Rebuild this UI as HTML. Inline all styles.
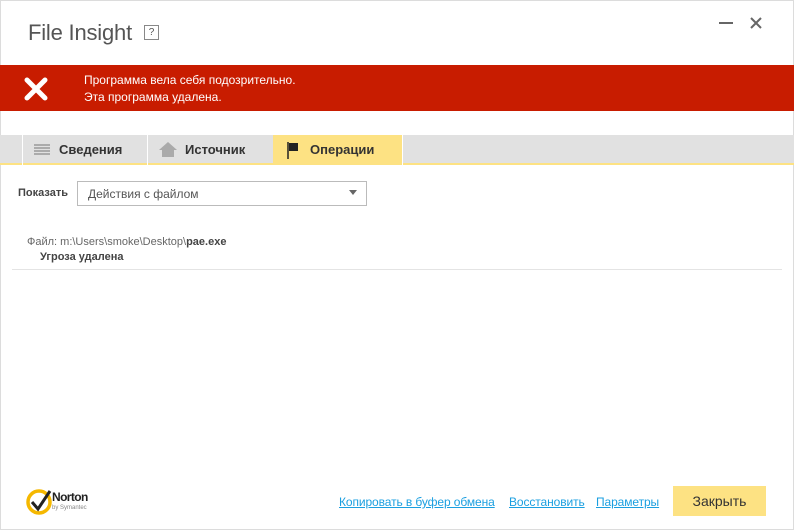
<!DOCTYPE html><html><head><meta charset="utf-8"><style>
*{margin:0;padding:0;box-sizing:border-box}
body{width:794px;height:530px;background:#fff;font-family:"Liberation Sans","DejaVu Sans",sans-serif;position:relative;overflow:hidden}
.a{position:absolute}
</style></head><body>
<div class="a" style="left:0;top:0;width:794px;height:530px;border:1px solid #dcdcdc"></div>
<div class="a" style="left:28px;top:20px;font-size:22px;color:#555;letter-spacing:-0.2px">File Insight</div>
<div class="a" style="left:144px;top:25px;width:15px;height:15px;border:1px solid #888;font-size:10px;color:#555;text-align:center;line-height:13px">?</div>
<div class="a" style="left:719px;top:22px;width:14px;height:2px;background:#666"></div>
<svg class="a" style="left:749px;top:16px" width="14" height="14"><path d="M2 2L12 12M12 2L2 12" stroke="#666" stroke-width="2"/></svg>
<div class="a" style="left:0;top:65px;width:794px;height:46px;background:#c81c00"></div>
<svg class="a" style="left:24px;top:77px" width="24" height="24"><path d="M3 3L21 21M21 3L3 21" stroke="#fff" stroke-width="5" stroke-linecap="round"/></svg>
<div class="a" style="left:84px;top:72px;font-size:12px;color:#fff;line-height:17px">Программа вела себя подозрительно.<br>Эта программа удалена.</div>
<div class="a" style="left:0;top:135px;width:794px;height:30px;background:#e1e1e1;border-bottom:2px solid #fde283"></div>
<div class="a" style="left:22px;top:135px;width:1px;height:30px;background:#fff"></div>
<div class="a" style="left:147px;top:135px;width:1px;height:30px;background:#fff"></div>
<div class="a" style="left:273px;top:135px;width:129px;height:30px;background:#fde283"></div>
<div class="a" style="left:402px;top:135px;width:1px;height:30px;background:#fff"></div>
<svg class="a" style="left:34px;top:144px" width="16" height="12"><path d="M0 1H16M0 4H16M0 7H16M0 10H16" stroke="#999" stroke-width="1.5"/></svg>
<svg class="a" style="left:159px;top:142px" width="18" height="15"><path d="M9 0L0 8H3V15H15V8H18Z" fill="#aaa"/></svg>
<svg class="a" style="left:287px;top:142px" width="12" height="17"><path d="M1 0V17" stroke="#222" stroke-width="1.5"/><path d="M2 1H11V9H2Z" fill="#222"/></svg>
<div class="a" style="left:59px;top:142px;font-size:13px;font-weight:bold;color:#333">Сведения</div>
<div class="a" style="left:185px;top:142px;font-size:13px;font-weight:bold;color:#333">Источник</div>
<div class="a" style="left:310px;top:142px;font-size:13px;font-weight:bold;color:#333">Операции</div>
<div class="a" style="left:18px;top:187px;font-size:11px;font-weight:bold;color:#444">Показать</div>
<div class="a" style="left:77px;top:181px;width:290px;height:25px;border:1px solid #bbb"></div>
<div class="a" style="left:88px;top:187px;font-size:12px;color:#555">Действия с файлом</div>
<svg class="a" style="left:349px;top:190px" width="8" height="5"><path d="M0 0H8L4 5Z" fill="#666"/></svg>
<div class="a" style="left:27px;top:236px;font-size:11px;color:#666">Файл: m:\Users\smoke\Desktop\<b style="color:#444">pae.exe</b></div>
<div class="a" style="left:40px;top:251px;font-size:11px;font-weight:bold;color:#444">Угроза удалена</div>
<div class="a" style="left:12px;top:269px;width:770px;height:1px;background:#e4e4e4"></div>
<svg class="a" style="left:26px;top:487px" width="30" height="30"><circle cx="13" cy="15" r="11" fill="none" stroke="#f5b800" stroke-width="3.5"/><path d="M6 15L12 22L24 4" fill="none" stroke="#222" stroke-width="3"/></svg>
<div class="a" style="left:52px;top:490px;font-size:12px;font-weight:bold;color:#222;letter-spacing:-0.6px">Norton</div>
<div class="a" style="left:52px;top:505px;font-size:6px;color:#888">by Symantec</div>
<div class="a" style="left:339px;top:495px;font-size:12px;color:#1a9fe0;text-decoration:underline;letter-spacing:-0.1px">Копировать в буфер обмена</div>
<div class="a" style="left:509px;top:495px;font-size:12px;color:#1a9fe0;text-decoration:underline;letter-spacing:-0.1px">Восстановить</div>
<div class="a" style="left:596px;top:495px;font-size:12px;color:#1a9fe0;text-decoration:underline;letter-spacing:-0.1px">Параметры</div>
<div class="a" style="left:673px;top:486px;width:93px;height:30px;background:#fde283;font-size:14px;color:#333;text-align:center;line-height:30px">Закрыть</div>
</body></html>
